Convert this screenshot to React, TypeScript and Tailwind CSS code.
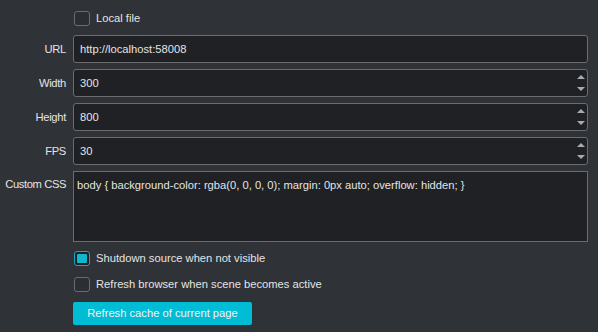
import React from 'react';

const Spin = () => (
  <div className="flex flex-col justify-between h-full py-[5px] pr-[2px]">
    <svg width="8" height="4" viewBox="0 0 8 4"><polygon points="4,0 8,4 0,4" fill="#a9abae" /></svg>
    <svg width="8" height="4" viewBox="0 0 8 4"><polygon points="0,0 8,0 4,4" fill="#a9abae" /></svg>
  </div>
);

const Row = ({ label, value, spin }: { label: string; value: string; spin?: boolean }) => (
  <div className="flex items-center h-[28px]">
    <div className="w-[73px] pr-[7px] text-right whitespace-nowrap tracking-[-0.3px]">{label}</div>
    <div className="flex-1 h-full flex items-center border border-[#6a6c70] rounded-[3px] bg-[#1f2125] pl-[6px]">
      <span className="flex-1">{value}</span>
      {spin && <Spin />}
    </div>
  </div>
);

const Check = ({ label, checked }: { label: string; checked?: boolean }) => (
  <div className="flex items-center gap-[6px] pl-[74px] h-[16px]">
    {checked ? (
      <div className="w-[16px] h-[15px] rounded-[3px] border border-[#13a9c2] p-[2px] bg-[#1f2125]">
        <div className="w-full h-full bg-[#0fb7cf] rounded-[1px]" />
      </div>
    ) : (
      <div className="w-[16px] h-[15px] rounded-[3px] border border-[#6a6c70] bg-[#2b2e33]" />
    )}
    <span>{label}</span>
  </div>
);

export default function App() {
  return (
    <div className="w-[598px] h-[332px] bg-[#2f3237] text-[#e4e4e4] text-[11.2px] overflow-hidden" style={{ fontFamily: '"Liberation Sans", Arial, sans-serif' }}>
      <div className="pt-[10px] pr-[10px]">
        <Check label="Local file" />
        <div className="flex flex-col gap-[6px] mt-[9px]">
          <Row label="URL" value="http://localhost:58008" />
          <Row label="Width" value="300" spin />
          <Row label="Height" value="800" spin />
          <Row label="FPS" value="30" spin />
          <div className="flex h-[71px]">
            <div className="w-[73px] pr-[7px] text-right pt-[5px] whitespace-nowrap tracking-[-0.4px]">Custom CSS</div>
            <div className="flex-1 border border-[#6a6c70] bg-[#1f2125] pl-[3px] pt-[5px]">
              body {'{'} background-color: rgba(0, 0, 0, 0); margin: 0px auto; overflow: hidden; {'}'}
            </div>
          </div>
        </div>
        <div className="mt-[8px] flex flex-col gap-[10px]">
          <Check label="Shutdown source when not visible" checked />
          <Check label="Refresh browser when scene becomes active" />
        </div>
        <div className="pl-[73px] mt-[10px]">
          <button className="w-[179px] h-[23px] bg-[#00bcd4] rounded-[2px] text-[#f4f4f4]">Refresh cache of current page</button>
        </div>
      </div>
    </div>
  );
}
